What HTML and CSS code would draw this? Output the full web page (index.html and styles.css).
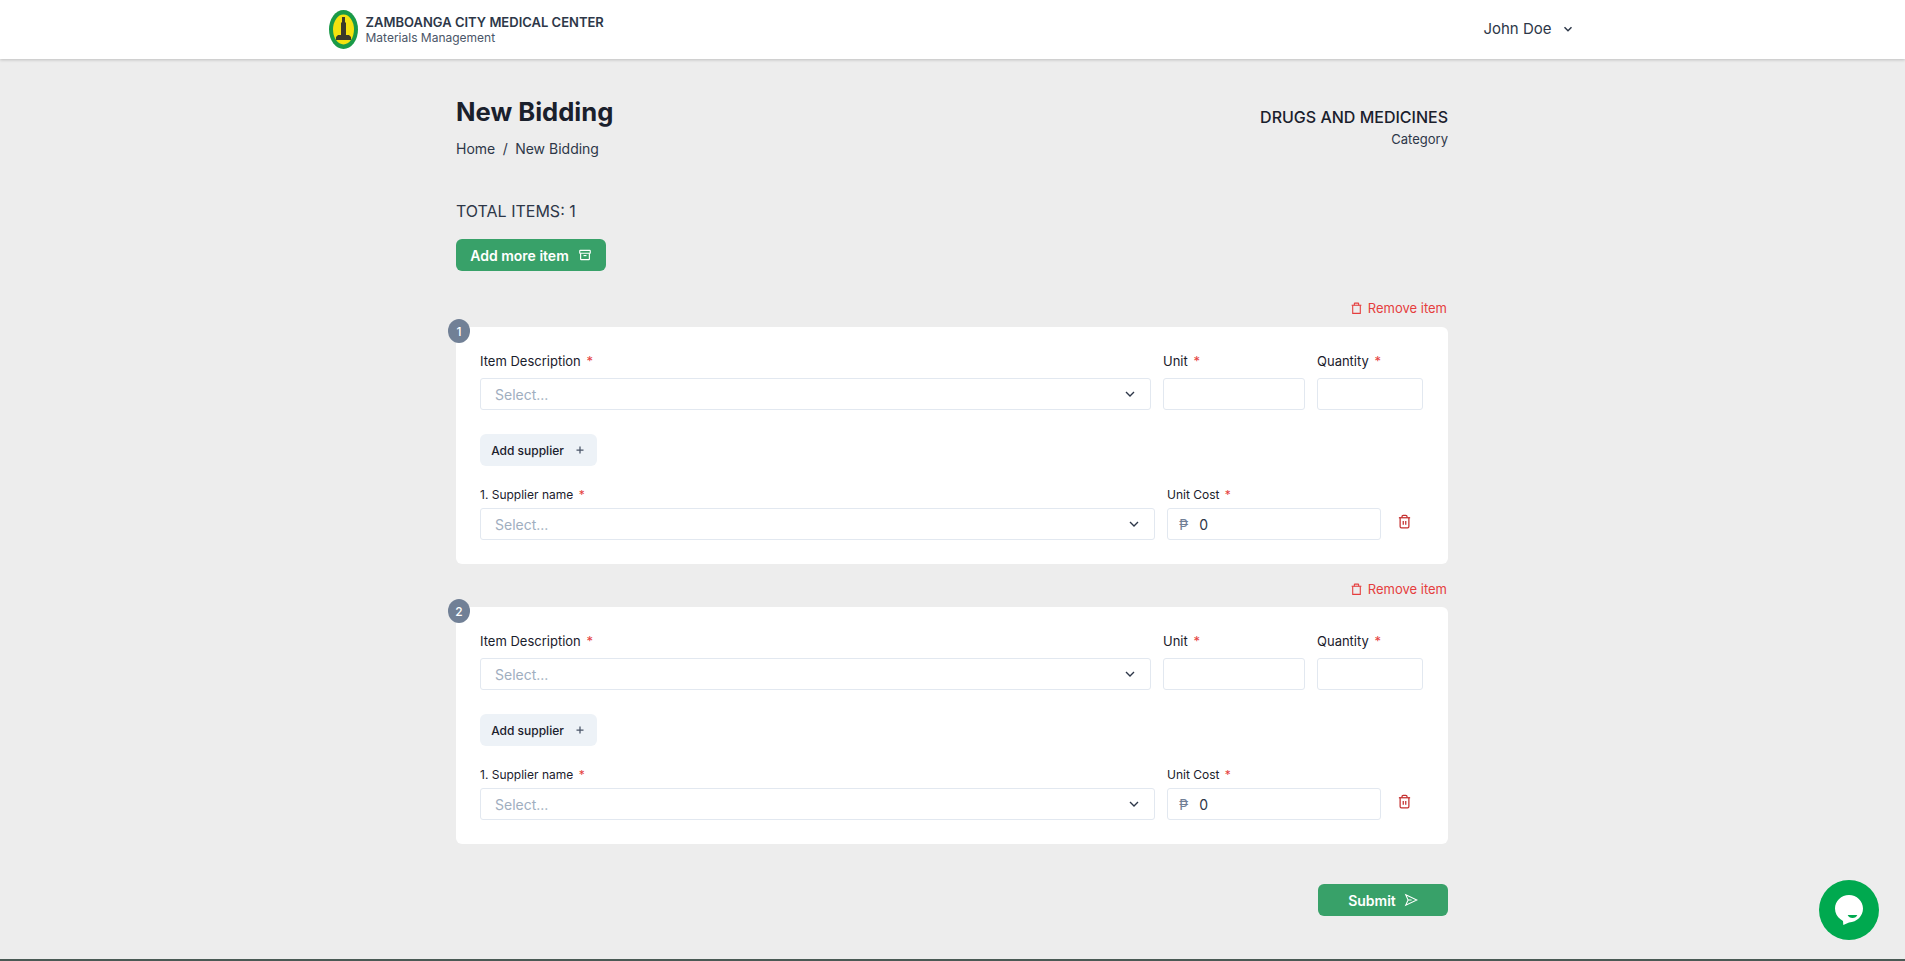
FILE: index.html
```html
<!DOCTYPE html>
<html lang="en">
<head>
  <meta charset="UTF-8" />
  <meta name="viewport" content="width=device-width, initial-scale=1.0" />
  <title>New Bidding | Materials Management</title>
  <link rel="stylesheet" href="styles.css">
</head>
<body>

<header class="topbar">
  <div class="topbar-inner">
    <div class="brand">
      <svg class="brand-logo" viewBox="0 0 29 39">
        <ellipse cx="14.500" cy="19.500" rx="14.500" ry="19.500" fill="#1a9a48"/>
        <ellipse cx="14.500" cy="19.500" rx="10.500" ry="15" fill="#f4e20f"/>
        <path d="M13 7h3v5l1 1v12h3l2 2v3H7v-3l2-2h3V13l1-1z" fill="#3a3a2a"/>
      </svg>
      <div>
        <div class="brand-name">ZAMBOANGA CITY MEDICAL CENTER</div>
        <div class="brand-sub">Materials Management</div>
      </div>
    </div>
    <div class="user">
      <span>John Doe</span>
      <svg class="user-chevron" viewBox="0 0 24 24"><path d="M6 9l6 6 6-6"/></svg>
    </div>
  </div>
</header>

<main class="page">
  <div class="page-head">
    <div>
      <h1>New Bidding</h1>
      <div class="crumbs">Home <span class="crumb-sep">/</span> New Bidding</div>
    </div>
    <div class="category">
      <div class="category-name">DRUGS AND MEDICINES</div>
      <div class="category-label">Category</div>
    </div>
  </div>

  <div class="total">TOTAL ITEMS: 1</div>
  <button class="btn btn-green btn-add">Add more item
    <svg class="icon" viewBox="0 0 24 24"><rect x="3" y="4" width="18" height="5" rx="1"/><path d="M4.500 9v10a1 1 0 0 0 1 1h13a1 1 0 0 0 1-1V9"/><path d="M9.500 13h5"/></svg>
  </button>

  <section class="item">
    <div class="remove-row">
      <a class="remove">
        <svg class="icon" viewBox="0 0 24 24"><path d="M3 6h18"/><path d="M19 6v15H5V6"/><path d="M8 6V3a1 1 0 0 1 1-1h6a1 1 0 0 1 1 1v3"/></svg>
        Remove item
      </a>
    </div>
    <div class="card">
      <span class="badge">1</span>
      <div class="row-top">
        <div class="field field-grow">
          <label>Item Description <span class="req">*</span></label>
          <div class="select">Select...<svg class="chevron" viewBox="0 0 24 24"><path d="M6 9l6 6 6-6"/></svg></div>
        </div>
        <div class="field field-unit">
          <label>Unit <span class="req">*</span></label>
          <input type="text">
        </div>
        <div class="field field-qty">
          <label>Quantity <span class="req">*</span></label>
          <input type="text">
        </div>
      </div>
      <button class="btn btn-gray">Add supplier
        <svg class="icon-plus" viewBox="0 0 24 24"><path d="M12 5v14M5 12h14"/></svg>
      </button>
      <div class="row-supplier">
        <div class="field field-grow">
          <label class="label-small">1. Supplier name <span class="req">*</span></label>
          <div class="select">Select...<svg class="chevron" viewBox="0 0 24 24"><path d="M6 9l6 6 6-6"/></svg></div>
        </div>
        <div class="field field-cost">
          <label class="label-small">Unit Cost <span class="req">*</span></label>
          <div class="cost-input"><span class="peso">₱</span><span>0</span></div>
        </div>
        <svg class="trash" viewBox="0 0 24 24"><path d="M3 6h18"/><path d="M19 6v14a2 2 0 0 1-2 2H7a2 2 0 0 1-2-2V6"/><path d="M8 6V4a2 2 0 0 1 2-2h4a2 2 0 0 1 2 2v2"/><path d="M10 11v6M14 11v6"/></svg>
      </div>
    </div>
  </section>

  <section class="item">
    <div class="remove-row">
      <a class="remove">
        <svg class="icon" viewBox="0 0 24 24"><path d="M3 6h18"/><path d="M19 6v15H5V6"/><path d="M8 6V3a1 1 0 0 1 1-1h6a1 1 0 0 1 1 1v3"/></svg>
        Remove item
      </a>
    </div>
    <div class="card">
      <span class="badge">2</span>
      <div class="row-top">
        <div class="field field-grow">
          <label>Item Description <span class="req">*</span></label>
          <div class="select">Select...<svg class="chevron" viewBox="0 0 24 24"><path d="M6 9l6 6 6-6"/></svg></div>
        </div>
        <div class="field field-unit">
          <label>Unit <span class="req">*</span></label>
          <input type="text">
        </div>
        <div class="field field-qty">
          <label>Quantity <span class="req">*</span></label>
          <input type="text">
        </div>
      </div>
      <button class="btn btn-gray">Add supplier
        <svg class="icon-plus" viewBox="0 0 24 24"><path d="M12 5v14M5 12h14"/></svg>
      </button>
      <div class="row-supplier">
        <div class="field field-grow">
          <label class="label-small">1. Supplier name <span class="req">*</span></label>
          <div class="select">Select...<svg class="chevron" viewBox="0 0 24 24"><path d="M6 9l6 6 6-6"/></svg></div>
        </div>
        <div class="field field-cost">
          <label class="label-small">Unit Cost <span class="req">*</span></label>
          <div class="cost-input"><span class="peso">₱</span><span>0</span></div>
        </div>
        <svg class="trash" viewBox="0 0 24 24"><path d="M3 6h18"/><path d="M19 6v14a2 2 0 0 1-2 2H7a2 2 0 0 1-2-2V6"/><path d="M8 6V4a2 2 0 0 1 2-2h4a2 2 0 0 1 2 2v2"/><path d="M10 11v6M14 11v6"/></svg>
      </div>
    </div>
  </section>

  <div class="submit-row">
    <button class="btn btn-green btn-submit">Submit
      <svg class="icon icon-send" viewBox="0 0 24 24"><path d="M3 3l19 9-19 9 4-9z"/><path d="M7 12h6"/></svg>
    </button>
  </div>
</main>

<div class="bottom-line"></div>

<a class="chat">
  <svg viewBox="0 0 28 30">
    <path d="M14 0C6.300 0 0 6 0 13.500 0 18 2.200 21.800 5.500 24.300L8 26l.3 4 5.700-2.500C22 27 28 21 28 13.500 28 6 21.700 0 14 0z" fill="#fff"/>
    <path d="M12.700 20h9.600c-.7 2-2.500 3-4.800 3s-4.100-1-4.800-3z" fill="#00a94f"/>
  </svg>
</a>

</body>
</html>
```

FILE: styles.css
```css
* { box-sizing: border-box; }
html, body { margin: 0; height: 100%; }
body { font-family: Inter, "Noto Sans", sans-serif; background-color: #ededed; color: #1a202c; display: flex; flex-direction: column; min-height: 961px; overflow: hidden; }

.topbar { background: #fff; height: 59px; box-shadow: 0 1px 3px rgba(0, 0, 0, 0.2); flex-shrink: 0; }
.topbar-inner { width: 1280px; height: 100%; margin: 0 auto; padding: 0 18px 0 16px; display: flex; align-items: center; justify-content: space-between; }
.brand { display: flex; align-items: center; gap: 8px; }
.brand-logo { width: 29px; height: 39px; display: block; }
.brand-name { font-size: 13px; font-weight: 600; line-height: 16px; color: #2d3748; }
.brand-sub { font-size: 12px; line-height: 16px; color: #4a5568; }
.user { display: flex; align-items: center; gap: 9px; font-size: 15px; color: #2d3748; padding-bottom: 2px; }
.user-chevron { width: 14px; height: 14px; fill: none; stroke: #2d3748; stroke-width: 2.500; }

.page { width: 993px; padding-right: 1px; margin: 0 auto; flex: 1; }
.page-head { display: flex; justify-content: space-between; padding-top: 37px; }
h1 { font-size: 25.600px; font-weight: 700; line-height: 32px; margin: 0; }
.crumbs { font-size: 14px; line-height: 20px; margin-top: 11px; color: #2d3748; }
.crumb-sep { margin: 0 3.500px; }
.category { text-align: right; padding-top: 10px; }
.category-name { font-size: 16px; font-weight: 500; line-height: 22px; }
.category-label { font-size: 13px; line-height: 16px; margin-top: 3px; color: #2d3748; }

.total { font-size: 16px; line-height: 24px; margin-top: 40px; color: #2d3748; }

.btn { font-family: inherit; border: 0; border-radius: 6px; height: 32px; display: inline-flex; align-items: center; justify-content: center; cursor: pointer; }
.btn-green { background: #38a169; color: #fff; font-size: 14px; font-weight: 600; }
.btn-add { width: 150px; margin-top: 16px; gap: 9px; }
.btn-gray { background: #edf2f7; color: #1a202c; font-size: 12px; font-weight: 500; width: 117px; gap: 10px; }
.btn-submit { width: 130px; gap: 8px; }
.icon { width: 14px; height: 14px; fill: none; stroke: currentColor; stroke-width: 2; }
.icon-send { stroke-width: 1.800; }
.icon-plus { width: 12px; height: 12px; fill: none; stroke: #4a5568; stroke-width: 2.500; }

.remove-row { height: 56px; display: flex; align-items: center; justify-content: flex-end; padding-top: 18px; }
.item + .item .remove-row { height: 43px; padding-top: 7px; }
.remove { display: inline-flex; align-items: center; gap: 5px; font-size: 13px; color: #e53e3e; margin-right: 1px; }
.remove .icon { width: 13px; height: 13px; }

.card { position: relative; background: #fff; border-radius: 6px; padding: 24px 25px 24px 24px; height: 237px; }
.badge { position: absolute; left: -8px; top: -8px; width: 22px; height: 24px; border-radius: 50%; background: #718096; color: #fff; font-size: 12px; font-weight: 500; display: flex; align-items: center; justify-content: center; }

.row-top, .row-supplier { display: flex; gap: 12px; }
.field { display: flex; flex-direction: column; }
.field-grow { flex: 1; }
.field-unit { width: 142px; }
.field-qty { width: 106px; }
.field-cost { width: 214px; }
label { font-size: 13px; line-height: 20px; height: 27px; color: #1a202c; }
.label-small { font-size: 12px; line-height: 16px; height: 21px; }
.req { color: #e53e3e; margin-left: 2px; }

input, .select, .cost-input { height: 32px; border: 1px solid #e2e8f0; border-radius: 3px; background: #fff; font-family: inherit; font-size: 14px; }
input { width: 100%; }
.select { display: flex; align-items: center; justify-content: space-between; padding: 0 12px 0 14px; color: #a0aec0; }
.chevron { width: 16px; height: 16px; fill: none; stroke: #2d3748; stroke-width: 2; }
.cost-input { display: flex; align-items: center; gap: 11px; padding: 0 11px; color: #2d3748; }
.peso { color: #718096; font-size: 14px; }

.btn-gray { margin-top: 24px; display: flex; }
.row-supplier { margin-top: 21px; }
.trash { width: 15px; height: 15px; fill: none; stroke: #c53030; stroke-width: 2; margin: 27px 11px 0 4px; }

.submit-row { display: flex; justify-content: flex-end; margin-top: 40px; }
.bottom-line { height: 2px; background: #4a5a55; flex-shrink: 0; }

.chat { position: fixed; right: 26px; bottom: 21px; width: 60px; height: 60px; border-radius: 50%; background: #00a94f; display: flex; align-items: center; justify-content: center; }
.chat svg { width: 28px; height: 30px; }
```
